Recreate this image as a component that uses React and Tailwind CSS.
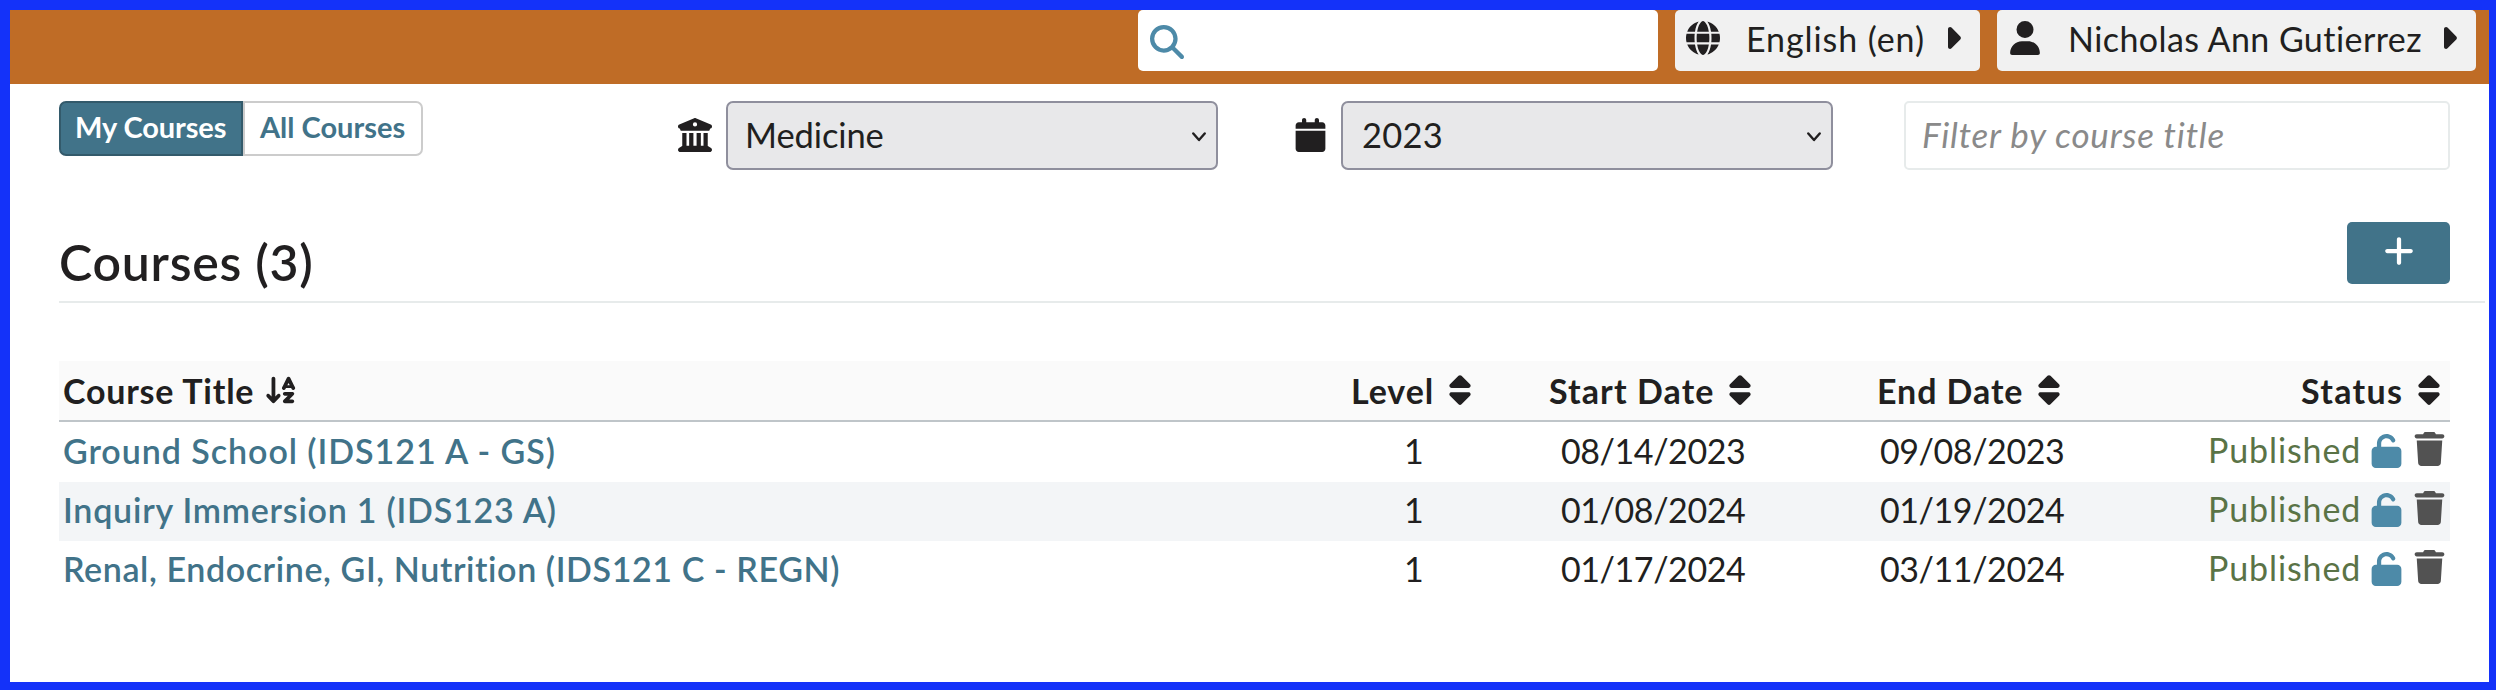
import {
  FaMagnifyingGlass,
  FaGlobe,
  FaUser,
  FaBuildingColumns,
  FaCalendar,
  FaPlus,
  FaSort,
  FaArrowDownAZ,
  FaUnlock,
  FaTrash,
} from "react-icons/fa6";

function Caret({ className }) {
  return (
    <svg viewBox="0 0 13 22" className={"h-[22px] w-[13px] shrink-0 " + className} fill="currentColor">
      <path d="M0 2.1C0 .3 2.200-.6 3.500.6L12.300 9.500c.8.8.8 2.100 0 2.900L3.500 21.300C2.200 22.600 0 21.700 0 19.900Z" />
    </svg>
  );
}

function Select({ children, className }) {
  return (
    <div
      className={
        "flex h-[69px] w-[492px] shrink-0 justify-between rounded-[7px] border-2 border-[#8f8f9d] bg-[#e8e8ea] pr-[10px] text-[34.5px] leading-[64px] " +
        className
      }
    >
      <span>{children}</span>
      <svg viewBox="0 0 14 10" className="mt-[29px] h-[10px] w-[14px]" fill="none" stroke="currentColor" strokeWidth="2.4" strokeLinecap="round" strokeLinejoin="round">
        <path d="M1.300 1.500 7 8l5.700-6.500" />
      </svg>
    </div>
  );
}

function Sort({ className }) {
  return <FaSort className={"mt-[12px] h-[34px] w-[22px] shrink-0 " + className} />;
}

const COURSES = [
  { title: "Ground School (IDS121 A - GS)", spacing: "tracking-[0.95px]", start: "08/14/2023", end: "09/08/2023", row: "h-[60px] pt-px" },
  { title: "Inquiry Immersion 1 (IDS123 A)", spacing: "tracking-[0.77px]", start: "01/08/2024", end: "01/19/2024", row: "h-[59px] bg-[#f3f5f7]" },
  { title: "Renal, Endocrine, GI, Nutrition (IDS121 C - REGN)", spacing: "tracking-[0.60px]", start: "01/17/2024", end: "03/11/2024", row: "h-[59px]" },
];

const COLUMNS = "grid grid-cols-[1241px_200px_330px_320px_300px] whitespace-nowrap ";

export default function App() {
  return (
    <div className="h-[690px] w-[2496px] overflow-hidden border-t-[10px] border-r-[7px] border-b-[8px] border-l-[10px] border-[#1432f9] bg-white font-['Lato','Liberation_Sans',sans-serif] text-[34px] text-[#211f20]">
      <header className="flex h-[74px] items-start justify-end gap-[17px] bg-[#bf6c26] pr-[13px] leading-[57px] whitespace-nowrap">
        <div className="h-[61px] w-[520px] rounded-[5px] bg-white pt-[15px] pl-[12px]">
          <FaMagnifyingGlass className="size-[34px] text-[#4d8aa8]" />
        </div>
        <div className="flex h-[61px] w-[305px] rounded-[5px] bg-[#f1f1f1] pl-[11px]">
          <FaGlobe className="mt-[11px] size-[34px] shrink-0" />
          <span className="ml-[26px] w-[202px] tracking-[0.92px]">English (en)</span>
          <Caret className="mt-[17px]" />
        </div>
        <div className="flex h-[61px] w-[479px] rounded-[5px] bg-[#f1f1f1] pl-[13px]">
          <FaUser className="mt-[11px] h-[34px] w-[30px] shrink-0" />
          <span className="ml-[28px] w-[376px] tracking-[0.44px]">Nicholas Ann Gutierrez</span>
          <Caret className="mt-[17px]" />
        </div>
      </header>

      <main className="pl-[49px]">
        <div className="flex items-start pt-[17px]">
          <div className="flex h-[55px] w-[364px] text-[29px] leading-[47px] font-bold whitespace-nowrap">
            <div className="w-[184px] rounded-l-[7px] border-2 border-[#335a6b] bg-[#417389] pl-[14px] tracking-[-0.1px] text-white">My Courses</div>
            <div className="w-[180px] rounded-r-[7px] border-2 border-[#cccccc] pl-[15px] text-[#417389]">All Courses</div>
          </div>
          <FaBuildingColumns className="mt-[17px] ml-[254px] h-[34px] w-[36px] shrink-0" />
          <Select className="ml-[13px] pl-[17px] tracking-[-0.1px]">Medicine</Select>
          <FaCalendar className="mt-[17px] ml-[77px] h-[34px] w-[31px] shrink-0" />
          <Select className="ml-[15px] pl-[19px] tracking-[0.22px]">2023</Select>
          <div className="ml-[71px] h-[69px] w-[546px] rounded-[5px] border-2 border-[#e7ebeb] pl-[16px] text-[35px] leading-[63px] tracking-[0.82px] text-[#8a8a8a] italic">
            Filter by course title
          </div>
        </div>

        <div className="mt-[50px] mr-[4px] flex h-[83px] items-start justify-between border-b-2 border-[#e7ebeb] pr-[35px]">
          <h2 className="pt-[3px] text-[50px] leading-[79px] font-semibold tracking-[0.75px]">Courses (3)</h2>
          <button className="mt-[2px] flex h-[62px] w-[103px] justify-center rounded-[5px] bg-[#417389] pt-[12px] text-white">
            <FaPlus className="h-[34px] w-[30px]" />
          </button>
        </div>

        <section className="mt-[58px] w-[2391px]">
          <div className={COLUMNS + "h-[61px] border-b-2 border-[#bfc5c9] bg-[#fafafa] leading-[59px] font-bold"}>
            <div className="flex pl-[4px]">
              <span className="w-[201px] tracking-[0.78px]">Course Title</span>
              <FaArrowDownAZ className="mt-[13px] h-[32px] w-[34px]" />
            </div>
            <div className="flex pl-[51px]">
              <span className="w-[98px] tracking-[0.94px]">Level</span>
              <Sort />
            </div>
            <div className="flex pl-[49px]">
              <span className="w-[180px] tracking-[1.1px]">Start Date</span>
              <Sort />
            </div>
            <div className="flex pl-[47px]">
              <span className="w-[161px] tracking-[0.92px]">End Date</span>
              <Sort />
            </div>
            <div className="flex pl-[151px]">
              <span className="w-[117px] tracking-[1.3px]">Status</span>
              <Sort />
            </div>
          </div>
          {COURSES.map((c) => (
            <div key={c.title} className={COLUMNS + "leading-[55px] " + c.row}>
              <a className={"pl-[4px] font-semibold text-[#417389] " + c.spacing}>{c.title}</a>
              <div className="pl-[104px]">1</div>
              <div className="pl-[61px] tracking-[-0.42px]">{c.start}</div>
              <div className="pl-[50px] tracking-[-0.42px]">{c.end}</div>
              <div className="flex pl-[58px]">
                <span className="w-[163px] leading-[53px] tracking-[0.91px] text-[#5a7346]">Published</span>
                <FaUnlock className="mt-[11px] h-[34px] w-[31px] text-[#4d8aa8]" />
                <FaTrash className="mt-[9px] ml-[12px] h-[34px] w-[31px] text-[#525252]" />
              </div>
            </div>
          ))}
        </section>
      </main>
    </div>
  );
}
